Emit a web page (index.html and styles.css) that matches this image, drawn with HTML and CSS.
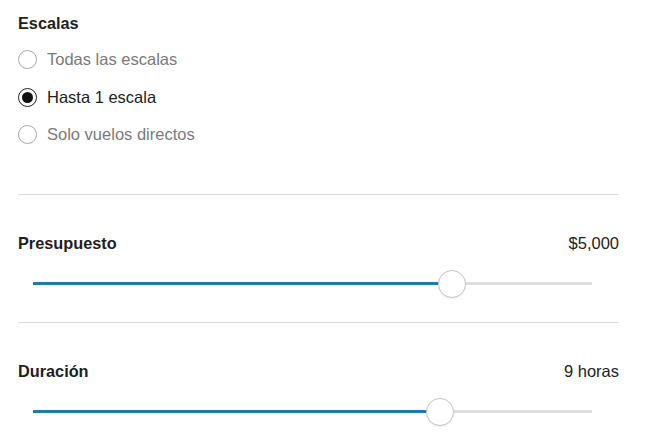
FILE: index.html
```html
<!DOCTYPE html>
<html lang="es">
<head>
    <meta charset="UTF-8">
    <meta name="viewport" content="width=device-width, initial-scale=1.0">
    <title>Filtros</title>
    <link rel="stylesheet" href="styles.css">
</head>
<body>
    <main class="filters">
        <section class="stops">
            <h3 class="filter-title">Escalas</h3>
            <ul class="radio-list">
                <li class="radio-row">
                    <span class="radio"></span>
                    <span class="radio-label">Todas las escalas</span>
                </li>
                <li class="radio-row selected">
                    <span class="radio"></span>
                    <span class="radio-label">Hasta 1 escala</span>
                </li>
                <li class="radio-row">
                    <span class="radio"></span>
                    <span class="radio-label">Solo vuelos directos</span>
                </li>
            </ul>
        </section>

        <hr class="divider">

        <section class="range-group">
            <div class="range-head">
                <h3 class="filter-title">Presupuesto</h3>
                <span class="range-value">$5,000</span>
            </div>
            <div class="slider">
                <div class="slider-fill" style="width: 75%"></div>
                <div class="slider-thumb" style="left: 75%"></div>
            </div>
        </section>

        <hr class="divider">

        <section class="range-group">
            <div class="range-head">
                <h3 class="filter-title">Duración</h3>
                <span class="range-value">9 horas</span>
            </div>
            <div class="slider">
                <div class="slider-fill" style="width: 72.8%"></div>
                <div class="slider-thumb" style="left: 72.8%"></div>
            </div>
        </section>
    </main>
</body>
</html>
```

FILE: styles.css
```css
body {
    font-family: 'Liberation Sans', Arial, sans-serif;
    margin: 0;
    padding: 0;
    background: #fff;
    color: #222;
}

.filters {
    padding: 13px 30px 0 18px;
}

.filter-title {
    margin: 0;
    font-size: 16.3px;
    line-height: 20px;
    font-weight: bold;
    color: #1e1e1e;
}

.stops {
    padding-bottom: 40px;
}

.radio-list {
    list-style: none;
    margin: 8px 0 0;
    padding: 0;
}

.radio-row {
    display: flex;
    align-items: center;
    gap: 10px;
    height: 37.5px;
}

.radio {
    box-sizing: border-box;
    width: 19px;
    height: 19px;
    border: 1.5px solid #a6a6a6;
    border-radius: 50%;
    display: flex;
    align-items: center;
    justify-content: center;
}

.radio-label {
    font-size: 16.5px;
    color: #7a7a7a;
}

.selected .radio {
    border-color: #222;
}

.selected .radio::after {
    content: '';
    width: 11px;
    height: 11px;
    border-radius: 50%;
    background: #111;
}

.selected .radio-label {
    color: #222;
}

.divider {
    border: none;
    border-top: 1px solid #dcdcdc;
    margin: 0;
}

.range-group {
    padding: 38px 0 24px;
}

.range-head {
    display: flex;
    justify-content: space-between;
    align-items: center;
}

.range-value {
    font-size: 16.5px;
    line-height: 20px;
    color: #222;
}

.slider {
    position: relative;
    height: 28px;
    margin: 17px 27px 0 15px;
    display: flex;
    align-items: center;
}

.slider::before {
    content: '';
    position: absolute;
    left: 0;
    right: 0;
    height: 3px;
    background: #dedede;
}

.slider-fill {
    position: relative;
    height: 3px;
    background: #1b7ea6;
}

.slider-thumb {
    position: absolute;
    top: 0;
    box-sizing: border-box;
    width: 28px;
    height: 28px;
    margin-left: -14px;
    border-radius: 50%;
    background: #fff;
    border: 1px solid #c6c6c6;
    box-shadow: 0 1px 2px rgba(0, 0, 0, 0.08);
}
```
